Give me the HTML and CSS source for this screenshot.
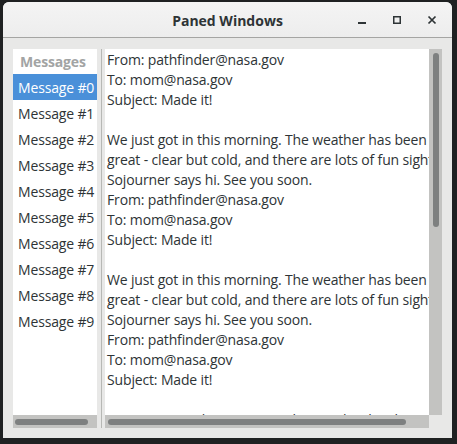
FILE: index.html
```html
<!DOCTYPE html>
<html>
<head>
<meta charset="utf-8">
<link rel="stylesheet" href="styles.css">
</head>
<body>
<div class="window">
  <div class="titlebar">
    <div class="title">Paned Windows</div>
    <div class="controls">
      <svg class="ctl" width="12" height="12" viewBox="0 0 12 12"><rect x="2" y="8" width="8" height="2" fill="#2e3436"/></svg>
      <svg class="ctl" width="12" height="12" viewBox="0 0 12 12"><rect x="2.75" y="2.75" width="6.5" height="6.5" fill="none" stroke="#2e3436" stroke-width="1.5"/></svg>
      <svg class="ctl" width="12" height="12" viewBox="0 0 12 12"><path d="M2.5 2.5 L9.5 9.5 M9.5 2.5 L2.5 9.5" stroke="#2e3436" stroke-width="1.7" fill="none"/></svg>
    </div>
  </div>
  <div class="content">
    <div class="pane-left">
      <div class="list">
        <div class="list-header">Messages</div>
        <div class="row selected">Message #0</div>
        <div class="row">Message #1</div>
        <div class="row">Message #2</div>
        <div class="row">Message #3</div>
        <div class="row">Message #4</div>
        <div class="row">Message #5</div>
        <div class="row">Message #6</div>
        <div class="row">Message #7</div>
        <div class="row">Message #8</div>
        <div class="row">Message #9</div>
      </div>
      <div class="hscroll"><div class="hthumb left-thumb"></div></div>
    </div>
    <div class="separator"><div class="sep-line"></div></div>
    <div class="pane-right">
      <div class="text-row">
        <div class="text">From: pathfinder@nasa.gov
To: mom@nasa.gov
Subject: Made it!

We just got in this morning. The weather has been
great - clear but cold, and there are lots of fun sights.
Sojourner says hi. See you soon.
From: pathfinder@nasa.gov
To: mom@nasa.gov
Subject: Made it!

We just got in this morning. The weather has been
great - clear but cold, and there are lots of fun sights.
Sojourner says hi. See you soon.
From: pathfinder@nasa.gov
To: mom@nasa.gov
Subject: Made it!

We just got in this morning. The weather has been
great - clear but cold, and there are lots of fun sights.
Sojourner says hi. See you soon.</div>
        <div class="vscroll"><div class="vthumb"></div></div>
      </div>
      <div class="bottom-row">
        <div class="hscroll grow"><div class="hthumb right-thumb"></div></div>
        <div class="corner"></div>
      </div>
    </div>
  </div>
</div>
</body>
</html>
```
FILE: styles.css
```css
html, body {
  margin: 0;
  padding: 0;
}
body {
  width: 457px;
  height: 444px;
  background: #1f2122;
  overflow: hidden;
  font-family: "Open Sans", "DejaVu Sans", sans-serif;
  color: #2e3436;
}
.window {
  margin: 2px 0 0 3px;
  width: 449px;
  height: 436px;
  background: #e8e8e7;
  border-radius: 6px 6px 0 0;
  display: flex;
  flex-direction: column;
  overflow: hidden;
}
.titlebar {
  height: 35px;
  flex: none;
  background: linear-gradient(#f4f4f4, #ededed);
  border-bottom: 1px solid #a5a5a3;
  position: relative;
  display: flex;
  align-items: center;
  justify-content: center;
}
.title {
  font-weight: bold;
  font-size: 14px;
  color: #2e3436;
  margin-top: 1px;
}
.controls {
  position: absolute;
  right: 14px;
  top: 12px;
  display: flex;
  gap: 23px;
}
.ctl {
  display: block;
}
.content {
  flex: 1;
  min-height: 0;
  display: flex;
  padding: 11px 10px 10px 10px;
  overflow: hidden;
}
.pane-left {
  width: 84px;
  display: flex;
  flex-direction: column;
  flex: none;
  min-height: 0;
}
.list {
  flex: 1;
  min-height: 0;
  background: #ffffff;
  overflow: hidden;
  font-size: 14px;
  letter-spacing: -0.15px;
}
.list-header {
  height: 25px;
  line-height: 26px;
  padding-left: 7px;
  color: #a2a4a4;
  font-weight: bold;
  white-space: nowrap;
}
.row {
  height: 26px;
  line-height: 27px;
  padding-left: 5px;
  white-space: nowrap;
}
.row.selected {
  background: #4a90d9;
  color: #ffffff;
}
.hscroll {
  height: 13px;
  background: #c3c3c1;
  display: flex;
  align-items: center;
  flex: none;
}
.hthumb {
  height: 6px;
  border-radius: 3px;
  background: #7e8080;
}
.left-thumb {
  margin-left: 2px;
  width: 73px;
}
.right-thumb {
  margin-left: 3px;
  width: 298px;
}
.separator {
  width: 8px;
  flex: none;
  display: flex;
  justify-content: center;
}
.sep-line {
  width: 1px;
  margin-left: 1px;
  background: #b7b8b5;
  height: 100%;
}
.pane-right {
  flex: 1;
  display: flex;
  flex-direction: column;
  min-width: 0;
  min-height: 0;
}
.text-row {
  flex: 1;
  display: flex;
  min-height: 0;
}
.text {
  flex: 1;
  background: #ffffff;
  white-space: pre;
  overflow: hidden;
  font-size: 14px;
  letter-spacing: -0.15px;
  line-height: 20px;
  padding-left: 2px;
  padding-top: 1px;
  min-width: 0;
}
.vscroll {
  width: 13px;
  flex: none;
  background: #c3c3c1;
  display: flex;
  justify-content: center;
}
.vthumb {
  width: 6px;
  height: 174px;
  margin-top: 4px;
  margin-left: 1px;
  border-radius: 3px;
  background: #7e8080;
}
.bottom-row {
  display: flex;
  height: 13px;
  flex: none;
}
.grow {
  flex: 1;
}
.corner {
  width: 13px;
  background: #e8e8e7;
}
```
